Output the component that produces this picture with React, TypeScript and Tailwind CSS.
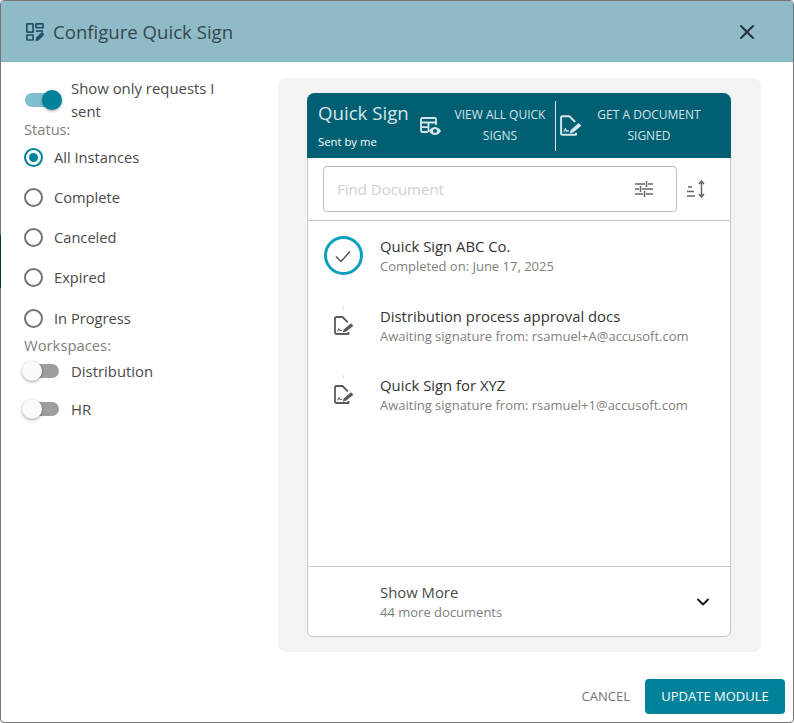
import { X, ChevronDown } from "lucide-react"

const SignDocIcon = ({ className }: { className?: string }) => (
    <svg viewBox="0 0 20 19" className={className} fill="none" stroke="currentColor" strokeWidth="1.8">
        <path d="M13.800 6.300L8.500 1H2.200A1.200 1.200 0 0 0 1 2.200v14.600A1.200 1.200 0 0 0 2.200 18H14.500v-2" strokeLinejoin="round" />
        <path d="M3.500 15.500l1.300-3 1.400 2.500 1-1 1 .8" strokeWidth="1" />
        <path d="M8.800 16.500l.9-3L17 7.200l2.400 2.600-7.400 6z" fill="currentColor" stroke="none" />
    </svg>
)

const ConfigIcon = () => (
    <svg viewBox="0 0 18 18" className="h-[18px] w-[18px] text-[#1f5366]" fill="none" stroke="currentColor" strokeWidth="1.700">
        <rect x="0.850" y="0.850" width="6.300" height="8.300" rx="0.500" />
        <rect x="10" y="0.850" width="7.200" height="3.800" rx="0.500" />
        <rect x="0.850" y="12" width="6.300" height="5" rx="0.500" />
        <path d="M10 8h7" />
        <path d="M9.500 18l.5-3.200 6-6 2.600 2.600-6 6z" fill="currentColor" stroke="none" />
    </svg>
)

const TableEyeIcon = () => (
    <svg viewBox="0 0 21 18" className="h-[18px] w-[21px] text-[#d5e6ea]" fill="none" stroke="currentColor" strokeWidth="1.800">
        <path d="M8 15H2.200A1.200 1.200 0 0 1 1 13.800V2.200A1.200 1.200 0 0 1 2.200 1h12.600A1.200 1.200 0 0 1 16 2.200V8" />
        <path d="M1 5.500h15M8.500 5.500V15M1 10.200h7.500" />
        <path d="M9 14c1.800-3 4-4 6-4s4.200 1 6 4c-1.800 3-4 4-6 4s-4.200-1-6-4z" fill="currentColor" stroke="none" />
        <circle cx="15" cy="14" r="2" fill="#005f73" stroke="none" />
    </svg>
)

const Toggle = ({ on }: { on: boolean }) => (
    <div className="relative ml-px h-[14px] w-[34px] shrink-0">
        <div className={`h-full w-full rounded-full ${on ? "bg-[#7fbfd0]" : "bg-[#9e9e9e]"}`} />
        <div
            className={`absolute top-[-3px] h-[20px] w-[20px] rounded-full shadow-[0_1px_3px_rgba(0,0,0,0.4)] ${
                on ? "right-[-3px] bg-[#00829b]" : "left-[-3px] bg-[#fafafa]"
            }`}
        />
    </div>
)

const Radio = ({ label, checked, className }: { label: string; checked?: boolean; className: string }) => (
    <div className={`flex items-center gap-[11px] ${className}`}>
        <div className={`flex h-[19px] w-[19px] items-center justify-center rounded-full border-2 ${checked ? "border-[#00829b]" : "border-[#757575]"}`}>
            {checked && <div className="h-[9px] w-[9px] rounded-full bg-[#00829b]" />}
        </div>
        <span className="text-[14.67px] leading-[20px] text-[#4a4a4a]">{label}</span>
    </div>
)

const DocRow = ({ title, sub, className }: { title: string; sub: string; className: string }) => (
    <div className={`flex items-center ${className}`}>
        <div className="relative flex w-[72px] justify-center">
            <div className="absolute top-[-10px] left-[35px] h-[4px] w-px bg-[#cfe6ee]" />
            <SignDocIcon className="h-[19px] w-[20px] text-[#5a5a5a]" />
        </div>
        <div>
            <div className="text-[14.85px] leading-[20px] text-[#333333]">{title}</div>
            <div className="mt-px text-[13px] leading-[18px] text-[#808080]">{sub}</div>
        </div>
    </div>
)

export default function App() {
    return (
        <div className="relative flex h-[723px] w-[794px] flex-col rounded-[4px] border border-[#757575] bg-white font-['Open_Sans',sans-serif]">
            <div className="absolute top-[234px] left-[-1px] h-[53px] w-px bg-[#003b47]" />
            <div className="flex h-[61px] shrink-0 items-center rounded-t-[3px] border-b border-[#7fb0bf] bg-[#8fbbc8] pt-[2px] pl-[25px] pr-[34px]">
                <ConfigIcon />
                <h1 className="ml-[9px] flex-1 text-[18.6px] leading-[28px] text-[#37474f]">Configure Quick Sign</h1>
                <X className="h-[24px] w-[24px] text-[#263238]" strokeWidth={2} />
            </div>

            <div className="flex flex-1">
                <div className="w-[277px] shrink-0 pl-[23px] pt-[15px]">
                    <div className="flex items-start gap-[12px] pr-[36px]">
                        <div className="mt-[16px]">
                            <Toggle on />
                        </div>
                        <div className="text-[14.9px] leading-[23px] text-[#4a4a4a]">Show only requests I sent</div>
                    </div>
                    <div className="mt-[-4px] text-[14.67px] leading-[20px] text-[#808080]">Status:</div>
                    <Radio label="All Instances" checked className="mt-[8px]" />
                    <Radio label="Complete" className="mt-[20px]" />
                    <Radio label="Canceled" className="mt-[20px]" />
                    <Radio label="Expired" className="mt-[20px]" />
                    <Radio label="In Progress" className="mt-[21px]" />
                    <div className="mt-[7px] text-[14.8px] leading-[20px] text-[#808080]">Workspaces:</div>
                    <div className="mt-[6px] flex items-center gap-[12px]">
                        <Toggle on={false} />
                        <span className="text-[14.9px] leading-[20px] text-[#4a4a4a]">Distribution</span>
                    </div>
                    <div className="mt-[18px] flex items-center gap-[12px]">
                        <Toggle on={false} />
                        <span className="text-[14.9px] leading-[20px] text-[#4a4a4a]">HR</span>
                    </div>
                </div>

                <div className="flex flex-col">
                    <div className="mt-[16px] h-[574px] w-[483px] rounded-[8px] bg-[#f3f3f3] pt-[15px] pl-[29px]">
                        <div className="flex h-[544px] w-[424px] flex-col rounded-[6px] border border-[#c8c8c8] bg-white">
                            <div className="mx-[-1px] mt-[-1px] flex h-[65px] shrink-0 items-center rounded-t-[8px] bg-[#005f73] text-[#d5e6ea]">
                                <div className="ml-[11px] w-[102px] shrink-0">
                                    <div className="mt-[-4px] text-[18.67px] leading-[27px] whitespace-nowrap">Quick Sign</div>
                                    <div className="mt-[8px] text-[11.3px] leading-[15px] font-medium whitespace-nowrap text-white">Sent by me</div>
                                </div>
                                <TableEyeIcon />
                                <div className="mt-[-2px] ml-[4px] w-[110px] shrink-0 text-center text-[12px] leading-[21px] font-medium">VIEW ALL QUICK SIGNS</div>
                                <div className="h-[50px] w-px bg-[#d5e6ea]" />
                                <SignDocIcon className="ml-[4px] h-[21px] w-[22px]" />
                                <div className="mt-[-2px] ml-[6px] w-[122px] text-center text-[12px] leading-[21px] font-medium">GET A DOCUMENT SIGNED</div>
                            </div>

                            <div className="flex h-[63px] shrink-0 items-start border-b border-[#c8c8c8] pt-[8px] pl-[15px]">
                                <div className="flex h-[46px] w-[354px] items-center justify-between rounded-[4px] border border-[#bdbdbd] pl-[13px] pr-[23px]">
                                    <span className="text-[15px] text-[#d0d0d0]">Find Document</span>
                                    <svg viewBox="0 0 18 18" className="h-[18px] w-[18px] text-[#666666]" fill="none" stroke="currentColor" strokeWidth="1.500">
                                        <path d="M0 4h10M13 4h5M11.500 1v6M0 9h4M7 9h11M5.500 6v6M0 14h8M11 14h7M9.500 11v6" />
                                    </svg>
                                </div>
                                <svg viewBox="0 0 20 18" className="mt-[14px] ml-[10px] h-[18px] w-[20px] text-[#666666]" fill="none" stroke="currentColor" strokeWidth="1.500">
                                    <path d="M1 7h4M0 11.500h7M0 16h8M14.500 1v16M12 4l2.500-3L17 4M12 14l2.500 3 2.500-3" />
                                </svg>
                            </div>

                            <div className="flex-1">
                                <div className="mt-[15px] flex items-center">
                                    <div className="flex w-[72px] justify-center pr-[2px]">
                                        <div className="flex h-[39px] w-[39px] items-center justify-center rounded-full border-[3px] border-[#0a9fbd]">
                                            <svg viewBox="0 0 18 18" className="h-[18px] w-[18px] text-[#555555]" fill="none" stroke="currentColor" strokeWidth="1.500">
                                                <path d="M2 9.500l5 5 9-10" />
                                            </svg>
                                        </div>
                                    </div>
                                    <div>
                                        <div className="text-[14.85px] leading-[20px] text-[#333333]">Quick Sign ABC Co.</div>
                                        <div className="mt-px text-[13px] leading-[18px] text-[#808080]">Completed on: June 17, 2025</div>
                                    </div>
                                </div>
                                <DocRow className="mt-[31px]" title="Distribution process approval docs" sub="Awaiting signature from: rsamuel+A@accusoft.com" />
                                <DocRow className="mt-[30px]" title="Quick Sign for XYZ" sub="Awaiting signature from: rsamuel+1@accusoft.com" />
                            </div>

                            <div className="flex h-[70px] shrink-0 items-center border-t border-[#c8c8c8] pl-[72px] pr-[17px]">
                                <div className="flex-1">
                                    <div className="text-[14.85px] leading-[20px] text-[#4a4a4a]">Show More</div>
                                    <div className="mt-px text-[13px] leading-[18px] text-[#808080]">44 more documents</div>
                                </div>
                                <ChevronDown className="h-[20px] w-[20px] text-[#222222]" strokeWidth={2.5} />
                            </div>
                        </div>
                    </div>

                    <div className="mt-[27px] flex items-center justify-end">
                        <span className="mr-[15px] text-[13px] text-[#757575]">CANCEL</span>
                        <button className="mr-[-24px] h-[35px] w-[140px] rounded-[4px] bg-[#00829b] text-[13px] font-medium text-white">UPDATE MODULE</button>
                    </div>
                </div>
            </div>
        </div>
    )
}
